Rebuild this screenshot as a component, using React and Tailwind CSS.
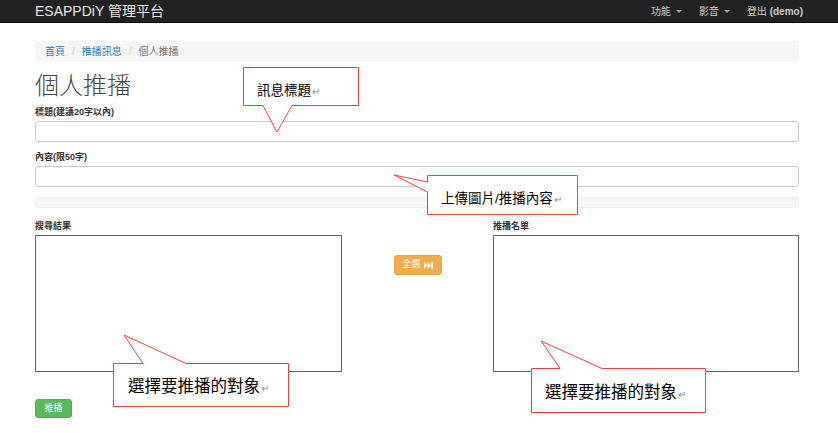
import React from "react";

const F = { fontFamily: '"Liberation Sans", "Noto Sans CJK TC", sans-serif' };

function Caret() {
  return <span className="ml-[5px] inline-block w-0 h-0 border-l-[3px] border-r-[3px] border-t-[3px] border-l-transparent border-r-transparent border-t-[#9d9d9d] align-middle" />;
}

function Ret() {
  return <span className="text-[#888] text-[10px] ml-[1px]">↵</span>;
}

export default function App() {
  return (
    <div className="relative w-[838px] h-[433px] bg-white overflow-hidden text-[#333]" style={F}>
      {/* navbar */}
      <div className="h-[23px] bg-[#222] border-b border-[#080808] flex items-center px-[35px]">
        <div className="text-[14px] text-[#e5e5e5] leading-none">ESAPPDiY 管理平台</div>
        <div className="ml-auto flex items-center text-[10px] text-[#cfcfcf] gap-[17px]">
          <span className="flex items-center">功能<Caret /></span>
          <span className="flex items-center">影音<Caret /></span>
          <span>登出 <b>(demo)</b></span>
        </div>
      </div>

      <div className="px-[35px] pt-[18px] w-[800px] box-content">
        <div className="w-[764px]">
          {/* breadcrumb */}
          <div className="h-[21px] bg-[#f5f5f5] rounded-[3px] flex items-center px-[10px] text-[10px]">
            <span className="text-[#337ab7]">首頁</span>
            <span className="text-[#ccc] mx-[7px]">/</span>
            <span className="text-[#337ab7]">推播訊息</span>
            <span className="text-[#ccc] mx-[7px]">/</span>
            <span className="text-[#777]">個人推播</span>
          </div>

          <div className="mt-[10px] text-[24px] leading-[28px] font-light text-[#444]">個人推播</div>

          <div className="mt-[6px] text-[9px] font-bold leading-[12px]">標題(建議20字以內)</div>
          <div className="mt-[3px] h-[21px] border border-[#ccc] rounded-[3px]" />

          <div className="mt-[9px] text-[9px] font-bold leading-[12px]">內容(限50字)</div>
          <div className="mt-[3px] h-[21px] border border-[#ccc] rounded-[3px]" />

          <div className="mt-[10px] h-[11px] bg-[#f5f5f5] rounded-[3px] border border-[#eee]" />

          <div className="mt-[12px] grid grid-cols-[307px_1fr_306px]">
            <div>
              <div className="text-[9px] font-bold leading-[12px]">搜尋結果</div>
              <div className="mt-[3px] h-[137px] border border-[#666]" />
            </div>
            <div className="flex justify-center pt-[35px]">
              <div className="h-[20px] w-[48px] bg-[#f0ad4e] border border-[#eea236] rounded-[3px] text-white text-[9px] flex items-center justify-center gap-[3px]">
                全選
                <svg width="9" height="7" viewBox="0 0 9 7"><path d="M0 0 L3.5 3.5 L0 7 Z M3.5 0 L7 3.5 L3.5 7 Z" fill="#fff" /><rect x="7.3" y="0" width="1.7" height="7" fill="#fff" /></svg>
              </div>
            </div>
            <div>
              <div className="text-[9px] font-bold leading-[12px]">推播名單</div>
              <div className="mt-[3px] h-[137px] border border-[#666]" />
            </div>
          </div>

          <div className="mt-[27px] h-[19px] w-[37px] bg-[#5cb85c] border border-[#4cae4c] rounded-[3px] text-white text-[9px] flex items-center justify-center">推播</div>
        </div>
      </div>

      {/* callouts overlay */}
      <svg className="absolute left-0 top-0" width="838" height="433" viewBox="0 0 838 433">
        <g fill="#fff" stroke="#ff3b3b" strokeWidth="1" strokeLinejoin="miter">
          <path d="M243.5,67.5 L358.5,67.5 L358.5,105.5 L292,105.5 L277,132 L263,105.5 L243.5,105.5 Z" />
          <path d="M427.5,175.5 L577.5,175.5 L577.5,214.5 L427.5,214.5 L427.5,192 L394,175 L427.5,182 Z" />
          <path d="M113.5,363.5 L143,363.5 L124,335 L186,363.5 L288.5,363.5 L288.5,406.5 L113.5,406.5 Z" />
          <path d="M531.5,368.5 L560,368.5 L541,341 L602,368.5 L705.5,368.5 L705.5,412.5 L531.5,412.5 Z" />
        </g>
      </svg>
      <div className="absolute left-[257px] top-[83px] text-[13.5px] leading-[16px] text-black">訊息標題<Ret /></div>
      <div className="absolute left-[441px] top-[191px] text-[13.5px] leading-[16px] text-black">上傳圖片/推播內容<Ret /></div>
      <div className="absolute left-[128px] top-[377px] text-[16.5px] leading-[19px] text-black">選擇要推播的對象<Ret /></div>
      <div className="absolute left-[545px] top-[383px] text-[16.5px] leading-[19px] text-black">選擇要推播的對象<Ret /></div>
    </div>
  );
}
